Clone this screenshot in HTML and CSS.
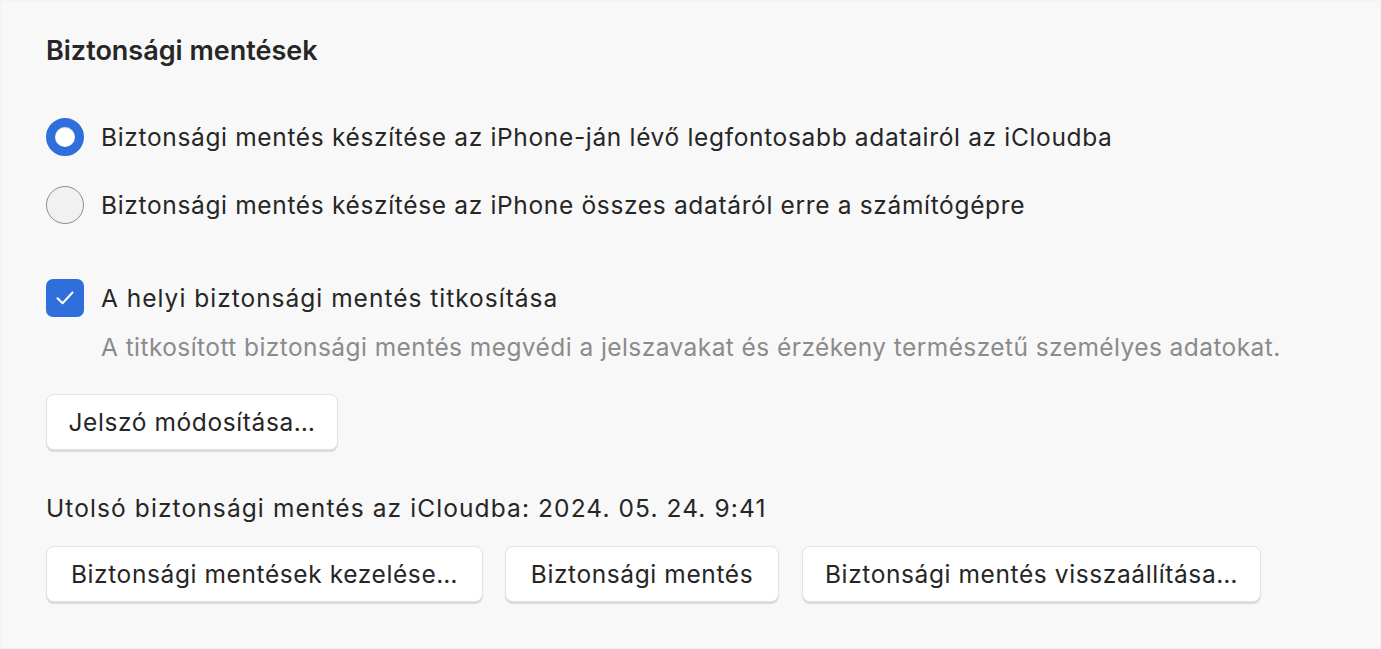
FILE: index.html
```html
<!DOCTYPE html>
<html lang="hu">
<head>
<meta charset="utf-8">
<title>Biztonsági mentések</title>
<link rel="stylesheet" href="styles.css">
</head>
<body>
<div class="panel">
  <h1 class="title">Biztonsági mentések</h1>

  <div class="options">
    <label class="option">
      <span class="radio radio-on"></span>
      <span class="label">Biztonsági mentés készítése az iPhone-ján lévő legfontosabb adatairól az iCloudba</span>
    </label>
    <label class="option">
      <span class="radio"></span>
      <span class="label">Biztonsági mentés készítése az iPhone összes adatáról erre a számítógépre</span>
    </label>
  </div>

  <div class="encrypt">
    <label class="option">
      <span class="checkbox">
        <svg width="24" height="24" viewBox="0 0 24 24"><path d="M4.5 12.3 L9.6 17.2 L19.5 6.5" fill="none" stroke="#fff" stroke-width="2" stroke-linecap="round" stroke-linejoin="round"/></svg>
      </span>
      <span class="label label-check">A helyi biztonsági mentés titkosítása</span>
    </label>
    <p class="hint">A titkosított biztonsági mentés megvédi a jelszavakat és érzékeny természetű személyes adatokat.</p>
  </div>

  <div class="btn-row first">
    <button class="btn btn-pw">Jelszó módosítása…</button>
  </div>

  <p class="last">Utolsó biztonsági mentés az iCloudba: 2024. 05. 24. 9:41</p>

  <div class="btn-row">
    <button class="btn btn-manage">Biztonsági mentések kezelése…</button>
    <button class="btn btn-backup">Biztonsági mentés</button>
    <button class="btn btn-restore">Biztonsági mentés visszaállítása…</button>
  </div>
</div>
</body>
</html>
```

FILE: styles.css
```css
html, body {
  margin: 0;
  padding: 0;
  background: #ffffff;
}

body {
  font-family: Inter, "Noto Sans", "Liberation Sans", sans-serif;
  color: #262626;
  font-size: 24.5px;
  letter-spacing: 0.55px;
}

.panel {
  box-sizing: border-box;
  width: 1381px;
  height: 649px;
  background: #f8f8f8;
  border: 1px solid #f3f3f3;
  padding: 33px 45px 0 45px;
}

.title {
  margin: 0;
  font-size: 27px;
  font-weight: 600;
  line-height: 34px;
  letter-spacing: 0;
}

.options {
  margin-top: 50px;
  display: flex;
  flex-direction: column;
  gap: 30px;
}

.option {
  display: flex;
  align-items: center;
  gap: 17px;
  line-height: 38px;
}

.label {
  letter-spacing: 0.66px;
}

.label-check {
  letter-spacing: 1px;
}

.radio {
  box-sizing: border-box;
  width: 38px;
  height: 38px;
  border-radius: 50%;
  border: 1.5px solid #8c8c8c;
  background: #f1f1f1;
  flex: none;
}

.radio-on {
  border: 9px solid #2f6fdb;
  background: #ffffff;
  box-shadow: inset 0 1px 1px rgba(0,0,0,0.15);
}

.encrypt {
  margin-top: 55px;
}

.checkbox {
  width: 38px;
  height: 38px;
  border-radius: 7px;
  background: #2f6fdb;
  display: flex;
  align-items: center;
  justify-content: center;
  flex: none;
}

.hint {
  margin: 17px 0 0 55px;
  color: #8b8b8b;
  line-height: 26px;
  letter-spacing: 0.43px;
}

.btn-row {
  display: flex;
  gap: 22px;
}

.btn-row.first {
  margin-top: 34px;
}

.btn {
  font-family: inherit;
  font-size: 24.5px;
  letter-spacing: 0.6px;
  color: #262626;
  height: 56px;
  padding: 0;
  background: #ffffff;
  border: 1px solid #e3e3e3;
  border-radius: 8px;
  box-shadow: 0 1.5px 1px rgba(0,0,0,0.12);
}

.btn-pw { width: 292px; }
.btn-manage { width: 437px; }
.btn-backup { width: 274px; }
.btn-restore { width: 459px; margin-left: 1px; }

.last {
  margin: 44px 0 24px 0;
  line-height: 28px;
  letter-spacing: 1.1px;
}
```
